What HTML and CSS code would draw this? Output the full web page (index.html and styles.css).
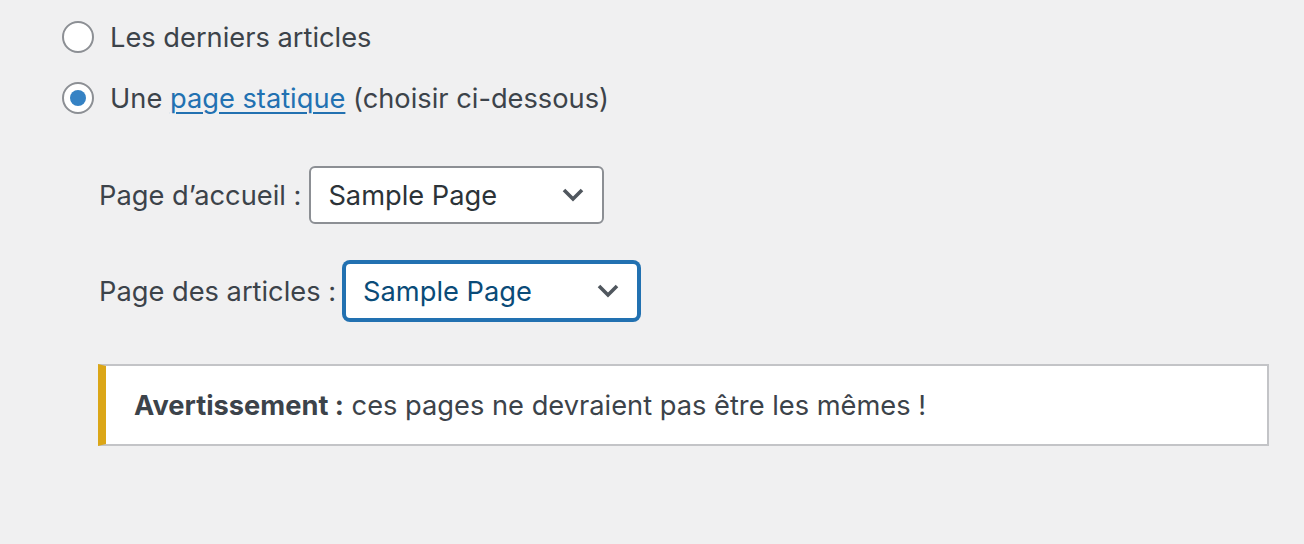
FILE: index.html
```html
<!DOCTYPE html>
<html lang="fr">
<head>
<meta charset="utf-8">
<link rel="stylesheet" href="styles.css">
</head>
<body>
<div class="page">
  <fieldset class="choices">
    <label class="choice">
      <span class="radio"></span>
      <span>Les derniers articles</span>
    </label>
    <label class="choice">
      <span class="radio checked"></span>
      <span>Une <a class="link" href="#">page statique</a> (choisir ci-dessous)</span>
    </label>
  </fieldset>
  <ul class="pages">
    <li class="page-row">
      <span class="page-label">Page d’accueil :</span>
      <div class="select">
        <span>Sample Page</span>
        <svg class="chev" width="22" height="14" viewBox="0 0 22 14"><polyline points="2,2 11,11 20,2" fill="none" stroke="#50575e" stroke-width="3.6"/></svg>
      </div>
    </li>
    <li class="page-row">
      <span class="page-label">Page des articles :</span>
      <div class="select focus">
        <span>Sample Page</span>
        <svg class="chev" width="22" height="14" viewBox="0 0 22 14"><polyline points="2,2 11,11 20,2" fill="none" stroke="#50575e" stroke-width="3.6"/></svg>
      </div>
    </li>
  </ul>
  <div class="notice">
    <p><strong>Avertissement :</strong> ces pages ne devraient pas être les mêmes !</p>
  </div>
</div>
</body>
</html>
```

FILE: styles.css
```css
html, body {
  margin: 0;
  padding: 0;
  background: #f0f0f1;
}
body {
  font-family: Inter, "Liberation Sans", sans-serif;
  font-size: 27.25px;
  color: #3c434a;
  width: 1304px;
  height: 544px;
  overflow: hidden;
}
.page {
  padding: 21px 0 0 62px;
}
.choices {
  border: 0;
  margin: 0;
  padding: 0;
  display: flex;
  flex-direction: column;
  gap: 29px;
}
.choice {
  display: flex;
  align-items: center;
  gap: 16px;
  height: 32px;
}
.radio {
  box-sizing: border-box;
  width: 32px;
  height: 32px;
  border: 2px solid #8c8f94;
  border-radius: 50%;
  background: #fff;
  display: flex;
  align-items: center;
  justify-content: center;
}
.radio.checked::before {
  content: "";
  width: 16px;
  height: 16px;
  border-radius: 50%;
  background: #3582c4;
}
.link {
  color: #2271b1;
  text-decoration: underline;
  text-decoration-thickness: 2px;
  text-underline-offset: 4px;
}
.pages {
  list-style: none;
  margin: 0;
  padding: 52px 0 0 37px;
  display: flex;
  flex-direction: column;
  gap: 38px;
}
.page-row {
  display: flex;
  align-items: center;
  gap: 8px;
}
.select {
  box-sizing: border-box;
  width: 295px;
  height: 58px;
  border: 2px solid #8c8f94;
  border-radius: 6px;
  background: #fff;
  display: flex;
  align-items: center;
  justify-content: space-between;
  padding: 0 18px 0 17px;
  color: #2c3338;
}
.select.focus {
  border-color: #2271b1;
  box-shadow: 0 0 0 2px #2271b1;
  color: #0a4b78;
}
.notice {
  box-sizing: border-box;
  margin: 44px 35px 0 36px;
  height: 82px;
  background: #fff;
  border: 2px solid #c3c4c7;
  border-left: 8px solid #dba617;
  display: flex;
  align-items: center;
  padding: 0 28px;
}
.notice p {
  margin: 0;
}
.notice strong {
  font-weight: 700;
}
```
